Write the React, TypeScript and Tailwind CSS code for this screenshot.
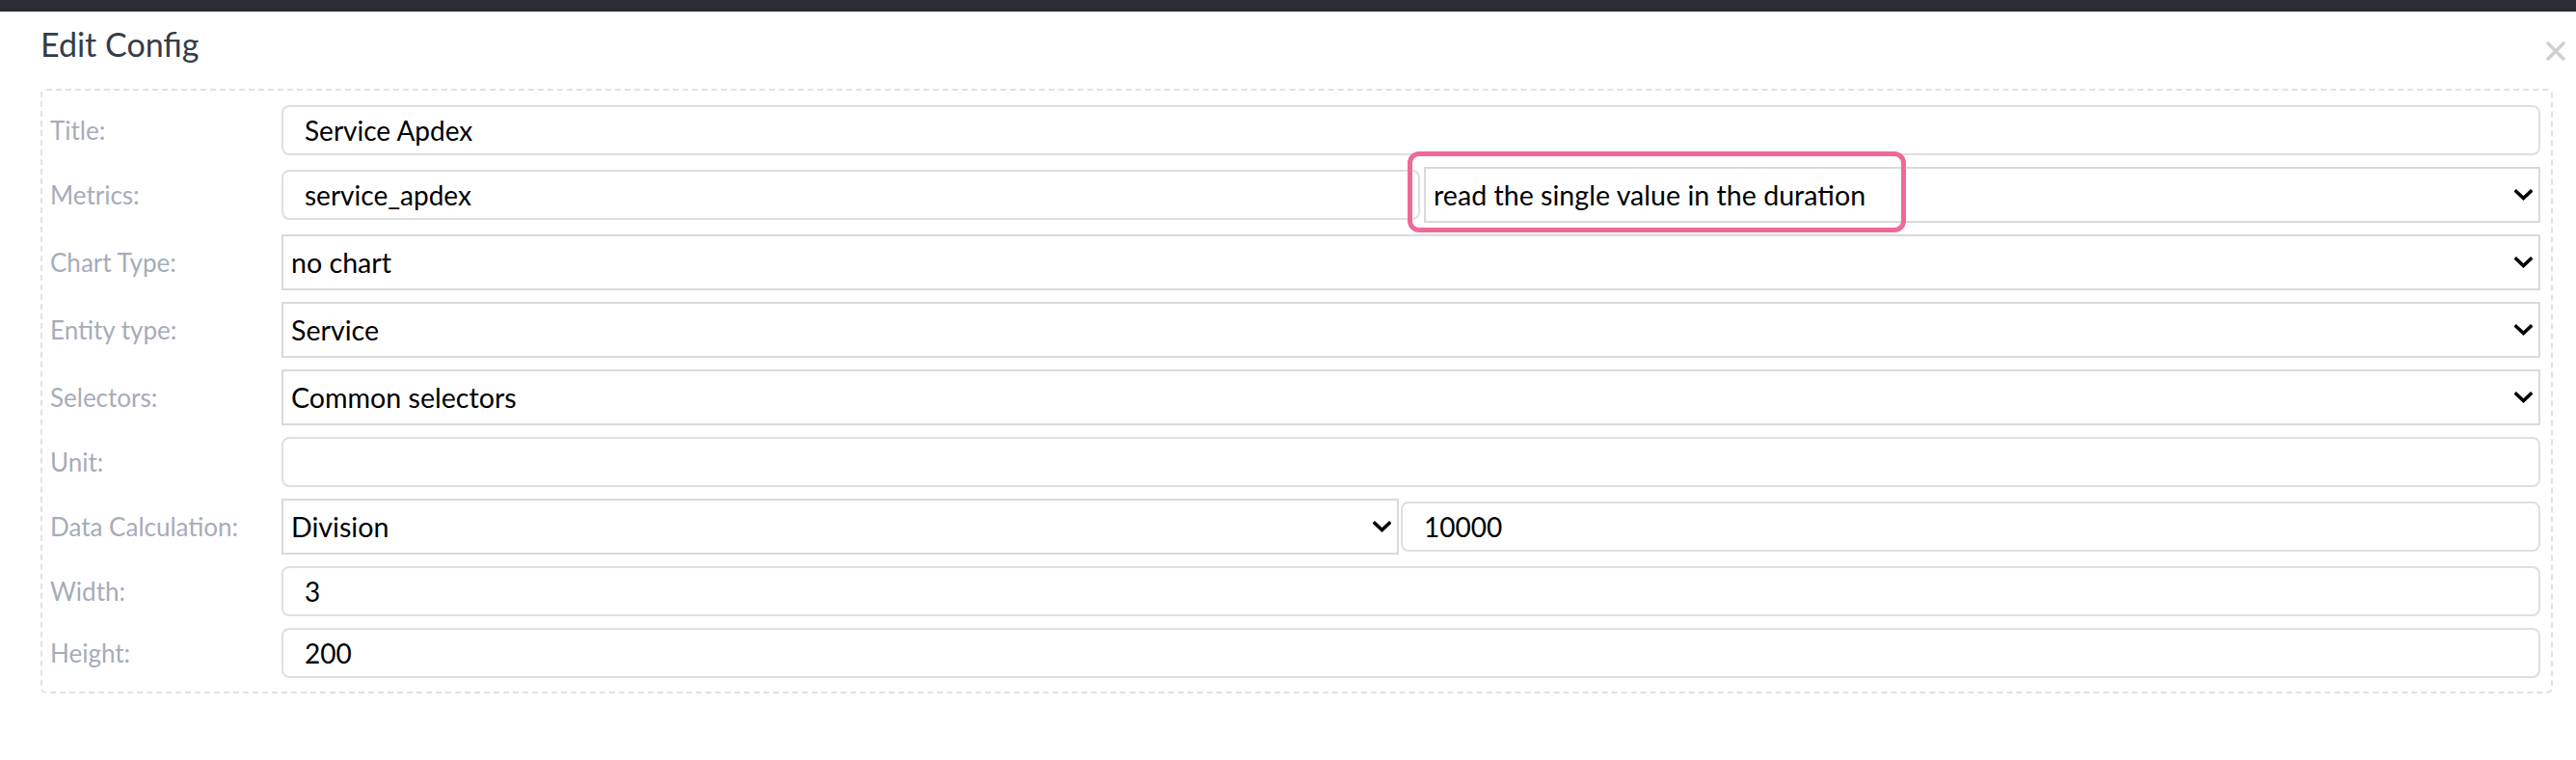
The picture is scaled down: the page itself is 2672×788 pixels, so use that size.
import React from "react";

const Chevron = () => (
  <svg
    className="pointer-events-none absolute right-[8px] top-1/2 -translate-y-1/2"
    width="19"
    height="12"
    viewBox="0 0 19 12"
    fill="none"
  >
    <path d="M2 2.5 L9.5 9.5 L17 2.5" stroke="#000" strokeWidth="3.6" strokeLinecap="square" />
  </svg>
);

const Select = ({ value, className = "" }: { value: string; className?: string }) => (
  <div className={"relative " + className}>
    <select
      defaultValue={value}
      className="block h-[58px] w-full appearance-none rounded-none border-2 border-[#dadada] bg-white pl-[8px] text-[28.6px] text-black outline-none"
    >
      <option value={value}>{value}</option>
    </select>
    <Chevron />
  </div>
);

const Input = ({ value, className = "" }: { value: string; className?: string }) => (
  <input
    defaultValue={value}
    className={
      "block h-[52px] rounded-[8px] border-2 border-[#dcdfe6] bg-white px-[22px] text-[28px] text-black outline-none " +
      className
    }
  />
);

const Row = ({ label, children, last = false }: { label: string; children: React.ReactNode; last?: boolean }) => (
  <div className={"flex items-center " + (last ? "" : "mb-[12px]")}>
    <div className="w-[240px] shrink-0 text-[26px] text-[#a6acba]">{label}</div>
    <div className="flex flex-1 items-center">{children}</div>
  </div>
);

export default function App() {
  return (
    <div
      className="relative h-[788px] w-[2672px] overflow-hidden bg-white"
      style={{ fontFamily: "Lato, 'Noto Sans', sans-serif" }}
    >
      <div className="h-[12px] bg-[#2a2e34]" />
      <div className="flex items-start justify-between pl-[42px] pr-[11px] pt-[16px]">
        <h2 className="text-[34px] leading-[36px] text-[#363c47]">Edit Config</h2>
        <svg className="mt-[15px]" width="20" height="20" viewBox="0 0 20 20">
          <path d="M2 2 L18 18 M18 2 L2 18" stroke="#cfcfcf" strokeWidth="3.5" strokeLinecap="round" />
        </svg>
      </div>
      <div className="ml-[42px] mt-[28px] w-[2606px] rounded-[6px] border-2 border-dashed border-[#dfe0ee] pb-[14px] pl-[8px] pr-[11px] pt-[15px]">
        <Row label="Title:">
          <Input value="Service Apdex" className="flex-1" />
        </Row>
        <Row label="Metrics:">
          <Input value="service_apdex" className="w-[1181px]" />
          <Select value="read the single value in the duration" className="ml-[4px] flex-1" />
        </Row>
        <Row label="Chart Type:">
          <Select value="no chart" className="flex-1" />
        </Row>
        <Row label="Entity type:">
          <Select value="Service" className="flex-1" />
        </Row>
        <Row label="Selectors:">
          <Select value="Common selectors" className="flex-1" />
        </Row>
        <Row label="Unit:">
          <Input value="" className="flex-1" />
        </Row>
        <Row label="Data Calculation:">
          <Select value="Division" className="w-[1159px]" />
          <Input value="10000" className="ml-[2px] flex-1" />
        </Row>
        <Row label="Width:">
          <Input value="3" className="flex-1" />
        </Row>
        <Row label="Height:" last>
          <Input value="200" className="flex-1" />
        </Row>
      </div>
      <div className="pointer-events-none absolute left-[1460px] top-[157px] h-[84px] w-[517px] rounded-[12px] border-[5px] border-[#ee6a95]" />
    </div>
  );
}
